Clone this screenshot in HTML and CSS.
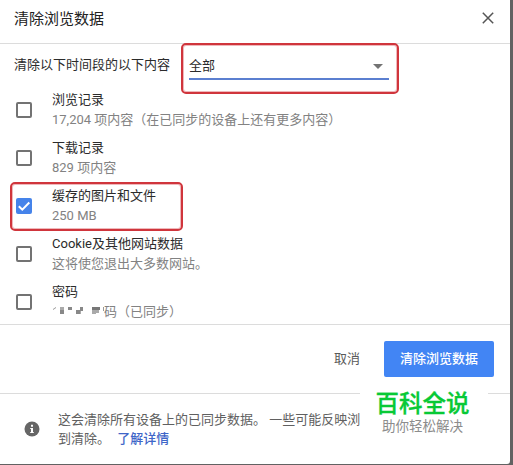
FILE: index.html
```html
<!DOCTYPE html>
<html lang="zh-CN">
<head>
  <meta charset="UTF-8" />
  <meta name="viewport" content="width=device-width, initial-scale=1.0"/>
  <title>清除浏览数据</title>
  <link rel="stylesheet" href="styles.css">
</head>
<body>
  <div class="dialog">
    <header class="dialog-header">
      <h1>清除浏览数据</h1>
      <svg class="close-icon" viewBox="0 0 12 12"><path d="M.8.8l10.4 10.4M11.2.8L.8 11.2"/></svg>
    </header>

    <main class="dialog-body">
      <div class="period">
        <span class="period-label">清除以下时间段的以下内容</span>
        <div class="period-select">
          <span class="period-value">全部</span>
          <svg class="arrow-icon" viewBox="0 0 10 5"><path d="M0 0h10L5 5z"/></svg>
          <span class="mark mark-select"></span>
        </div>
      </div>

      <div class="option">
        <span class="checkbox"></span>
        <div class="option-text">
          <div class="option-title">浏览记录</div>
          <div class="option-detail">17,204 项内容（在已同步的设备上还有更多内容）</div>
        </div>
      </div>
      <div class="option">
        <span class="checkbox"></span>
        <div class="option-text">
          <div class="option-title">下载记录</div>
          <div class="option-detail">829 项内容</div>
        </div>
      </div>
      <div class="option">
        <span class="checkbox checked">
          <svg viewBox="0 0 16 16"><path d="M2.8 8.2l3.5 3.5 7-7.2"/></svg>
        </span>
        <div class="option-text">
          <div class="option-title">缓存的图片和文件</div>
          <div class="option-detail">250 MB</div>
        </div>
        <span class="mark mark-cache"></span>
      </div>
      <div class="option">
        <span class="checkbox"></span>
        <div class="option-text">
          <div class="option-title">Cookie及其他网站数据</div>
          <div class="option-detail">这将使您退出大多数网站。</div>
        </div>
      </div>
      <div class="option">
        <span class="checkbox"></span>
        <div class="option-text">
          <div class="option-title">密码</div>
          <div class="option-detail masked">
            <!-- pixelated password count -->
            <svg class="mosaic" viewBox="0 0 52 12">
              <path fill="#999" d="M1 3l3-2v1L1 4z"/>
              <path fill="#aaa" d="M8 1h4v3H8zM26 5h3v3h-3z"/>
              <path fill="#888" d="M8 4h4v4H8zM16 1h4v3h-4zM24 4h4v4h-4zM28 1h3v4h-3z"/>
              <path fill="#777" d="M40 1h8v3h-8z"/>
              <path fill="#aaa" d="M40 4h4v4h-4zM44 4h3v3h-3z"/>
              <path fill="#999" d="M51 1h1v4h-1z"/>
            </svg>
            <span>码（已同步）</span>
          </div>
        </div>
      </div>
    </main>

    <div class="actions">
      <button class="btn btn-cancel">取消</button>
      <button class="btn btn-confirm">清除浏览数据</button>
    </div>

    <footer class="dialog-footer">
      <svg class="info-icon" viewBox="0 0 16 16">
        <circle cx="8" cy="8" r="7.5"/>
        <path d="M7 3.8h2v2H7zM6.2 7H9v4h.8v1H6.2v-1H7V8h-.8z"/>
      </svg>
      <p>这会清除所有设备上的已同步数据。 一些可能反映浏<br>到清除。 <a class="more-link">了解详情</a></p>
    </footer>

    <div class="stamp">
      <div class="stamp-name">百科全说</div>
      <div class="stamp-slogan">助你轻松解决</div>
    </div>
  </div>
</body>
</html>
```

FILE: styles.css
```css
* {
  box-sizing: border-box;
}

body {
  margin: 0;
  height: 465px;
  overflow: hidden;
  background-color: #626262;
  font-family: Roboto, "Noto Sans CJK SC", sans-serif;
  font-size: 13px;
  line-height: 20px;
  color: #2b2b2b;
}

.dialog {
  position: relative;
  display: flex;
  flex-direction: column;
  width: 510px;
  height: 464px;
  background-color: white;
  border-bottom-right-radius: 3px;
}

.dialog-header {
  display: flex;
  justify-content: space-between;
  align-items: center;
  height: 44px;
  padding: 0 16px 7px 14px;
  border-bottom: 1px solid #dcdcdc;
}

h1 {
  margin: 0;
  padding-top: 2px;
  font-size: 15px;
  font-weight: 400;
  color: #222;
}

.close-icon {
  width: 12px;
  height: 12px;
  fill: none;
  stroke: #555;
  stroke-width: 1.5;
}

.dialog-body {
  height: 281px;
  border-bottom: 1px solid #dcdcdc;
}

.period {
  display: flex;
  height: 42px;
  padding: 11px 0 0 14px;
}

.period-label {
  width: 175px;
}

.period-select {
  position: relative;
  display: flex;
  justify-content: space-between;
  width: 200px;
  height: 25px;
  border-bottom: 2px solid #5b7fd0;
}

.period-value {
  padding-top: 1px;
}

.arrow-icon {
  width: 10px;
  height: 5px;
  margin: 9px 6px 0 0;
  fill: #737373;
}

.mark {
  position: absolute;
  border: 2px solid #d0353c;
  border-radius: 5px;
  box-shadow: inset 0 0 0 1px rgba(208, 53, 60, 0.35);
}

.mark-select {
  left: -8px;
  top: -12px;
  width: 218px;
  height: 51px;
}

.option {
  position: relative;
  display: flex;
  align-items: center;
  height: 48px;
  padding-left: 16px;
}

.checkbox {
  width: 16px;
  height: 16px;
  margin-right: 20px;
  border: 2px solid #737373;
  border-radius: 2px;
}

.checkbox.checked {
  border: none;
  background-color: #4583ea;
}

.checkbox svg {
  display: block;
  fill: none;
  stroke: white;
  stroke-width: 2;
}

.option-detail {
  color: #828282;
}

.mark-cache {
  left: 10px;
  top: 0;
  width: 173px;
  height: 49px;
}

.masked {
  display: flex;
}

.mosaic {
  width: 52px;
  height: 12px;
  margin-top: 4px;
}

.actions {
  display: flex;
  justify-content: flex-end;
  align-items: center;
  height: 69px;
  padding-right: 16px;
  border-bottom: 1px solid #dcdcdc;
}

.btn {
  height: 36px;
  padding: 0;
  border: none;
  border-radius: 2px;
  background: none;
  font: inherit;
  color: #5a5a5a;
}

.btn-cancel {
  width: 74px;
}

.btn-confirm {
  width: 110px;
  background-color: #4285f4;
  font-weight: 500;
  color: white;
}

.dialog-footer {
  display: flex;
  align-items: center;
  height: 70px;
  padding-left: 24px;
  color: #606060;
}

.dialog-footer p {
  margin: 0 0 0 18px;
  line-height: 19px;
}

.info-icon {
  width: 16px;
  height: 16px;
  fill: #666;
}

.info-icon path {
  fill: white;
}

.more-link {
  margin-left: 4px;
  font-weight: 500;
  color: #3f66c8;
}

/* stamp laid over the lower right corner */
.stamp {
  position: absolute;
  left: 360px;
  top: 386px;
  width: 128px;
  height: 57px;
  padding: 5px 3px 0 0;
  background-color: white;
  text-align: center;
}

.stamp-name {
  font-size: 23.5px;
  font-weight: 500;
  line-height: 27px;
  color: #08c936;
  -webkit-text-stroke: 0.3px #08c936;
}

.stamp-slogan {
  font-size: 13.5px;
  line-height: 16px;
  color: #8c8c8c;
}
```
